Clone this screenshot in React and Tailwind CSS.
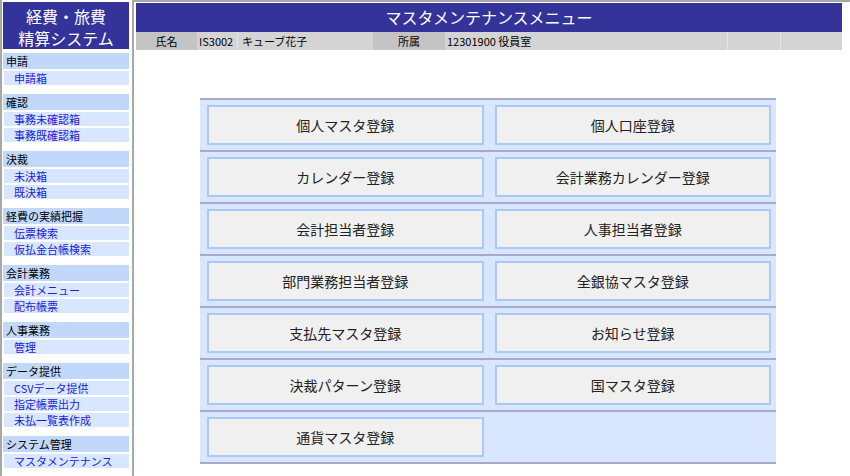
import React from "react";

const FONT = { fontFamily: '"Noto Sans CJK JP", "Noto Sans", sans-serif' };

const menu = [
  { title: "申請", items: ["申請箱"] },
  { title: "確認", items: ["事務未確認箱", "事務既確認箱"] },
  { title: "決裁", items: ["未決箱", "既決箱"] },
  { title: "経費の実績把握", items: ["伝票検索", "仮払金台帳検索"] },
  { title: "会計業務", items: ["会計メニュー", "配布帳票"] },
  { title: "人事業務", items: ["管理"] },
  { title: "データ提供", items: ["CSVデータ提供", "指定帳票出力", "未払一覧表作成"] },
  { title: "システム管理", items: ["マスタメンテナンス"] },
];

const rows = [
  ["個人マスタ登録", "個人口座登録"],
  ["カレンダー登録", "会計業務カレンダー登録"],
  ["会計担当者登録", "人事担当者登録"],
  ["部門業務担当者登録", "全銀協マスタ登録"],
  ["支払先マスタ登録", "お知らせ登録"],
  ["決裁パターン登録", "国マスタ登録"],
  ["通貨マスタ登録", null],
];

const Sidebar = () => (
  <div className="w-[134px] h-full border-l-2 border-r-2 border-[#a8a8a8] pl-[1px] pr-[3px] pt-[2px] bg-white">
    <div className="h-[47px] bg-[#333399] text-white text-[16px] leading-[22px] flex flex-col items-center justify-center pt-[2px]">
      <div>経費・旅費</div>
      <div>精算システム</div>
    </div>
    <div className="mt-[4px]">
      {menu.map((sec) => (
        <div key={sec.title} className="mb-[9px]">
          <div className="h-[16px] bg-[#c2d8fb] text-[11px] leading-[16px] text-black pl-[3px]">
            {sec.title}
          </div>
          {sec.items.map((it) => (
            <div
              key={it}
              className="mt-[2px] h-[14px] bg-[#d8e7ff] text-[11px] leading-[14px] text-[#1c1cd8] pl-[10px] ml-[1px]"
            >
              {it}
            </div>
          ))}
        </div>
      ))}
    </div>
  </div>
);

const InfoBar = () => (
  <div className="flex h-[18px] text-[11px] leading-[18px] text-black">
    <div className="w-[61px] bg-[#c4c4c4] text-center">氏名</div>
    <div className="w-[40px] bg-[#d4d4d4] pl-[2px]">IS3002</div>
    <div className="w-[136px] bg-[#d4d4d4] border-l border-[#e6e6e6] pl-[4px]">キューブ花子</div>
    <div className="w-[72px] bg-[#c4c4c4] text-center">所属</div>
    <div className="w-[282px] bg-[#d4d4d4] pl-[2px]">12301900 役員室</div>
    <div className="w-[53px] bg-[#d4d4d4] border-l border-[#e6e6e6]"></div>
    <div className="w-[62px] bg-[#d4d4d4] border-l border-[#e6e6e6]"></div>
  </div>
);

const MenuButton = ({ label }) => (
  <button className="h-[40px] w-full bg-[#f0f0f0] border-2 border-[#aac8f8] text-[14px] text-[#222] cursor-pointer">
    {label}
  </button>
);

export default function App() {
  return (
    <div className="w-[850px] h-[476px] flex bg-white overflow-hidden" style={FONT}>
      <Sidebar />
      <div className="flex-1 border-t-2 border-[#a8a8a8] pl-[2px]">
        <div className="w-[706px] mt-[1px] h-[29px] bg-[#333399] text-white text-[16px] leading-[29px] text-center">
          マスタメンテナンスメニュー
        </div>
        <InfoBar />
        <div className="ml-[64px] mt-[48px] w-[576px] bg-[#d8e6ff] border-b-2 border-[#a9a9cf]">
          {rows.map((r, i) => (
            <div
              key={i}
              className="border-t-2 border-[#a9a9cf] pt-[5px] pb-[5px] pl-[7px] pr-[5px] grid grid-cols-2 gap-x-[11px]"
            >
              <MenuButton label={r[0]} />
              {r[1] ? <MenuButton label={r[1]} /> : <div />}
            </div>
          ))}
        </div>
      </div>
    </div>
  );
}
